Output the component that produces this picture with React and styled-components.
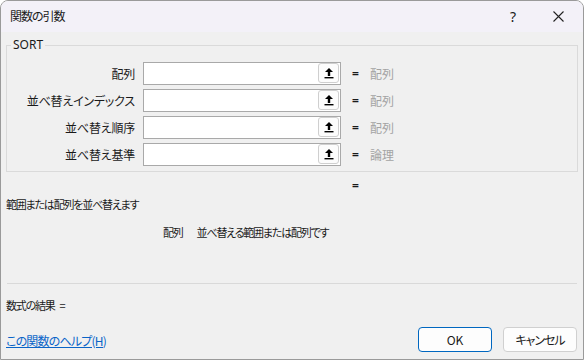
import React from "react";
import styled, { createGlobalStyle } from "styled-components";

const Global = createGlobalStyle`
  html, body { margin: 0; padding: 0; background: #ffffff; }
  body {
    font-family: "Noto Sans CJK JP", "Noto Sans", sans-serif;
    font-feature-settings: "palt";
    font-size: 12px;
    color: #1a1a1a;
  }
`;

const Window = styled.div`
  box-sizing: border-box;
  width: 584px;
  height: 360px;
  border: 1px solid #9a9a9a;
  border-radius: 8px 8px 0 0;
  background: #f0f0f0;
  overflow: hidden;
  display: flex;
  flex-direction: column;
`;

const TitleBar = styled.div`
  height: 31px;
  flex: none;
  background: #f3f1f8;
  display: flex;
  align-items: center;
  padding-left: 9px;
  padding-right: 3px;
`;

const Title = styled.div`
  flex: 1;
  font-size: 12px;
  letter-spacing: -1px;
  line-height: 1;
  margin-top: -1px;
`;

const TitleButton = styled.div`
  width: ${(p) => p.$w}px;
  height: 31px;
  display: flex;
  align-items: center;
  justify-content: center;
  font-family: "Noto Sans", sans-serif;
  font-size: 14px;
`;

const Body = styled.div`
  flex: 1;
  display: flex;
  flex-direction: column;
  padding: 13px 5px 0 5px;
`;

const Group = styled.div`
  position: relative;
  border: 1px solid #dadada;
  padding: 16px 0 6px 0;
  display: flex;
  flex-direction: column;
  gap: 5px;
`;

const GroupLabel = styled.div`
  position: absolute;
  left: 4px;
  top: -8px;
  padding: 0 2px;
  background: #f0f0f0;
  font-family: "Noto Sans", sans-serif;
  font-size: 12px;
  line-height: 14px;
`;

const Row = styled.div`
  display: flex;
  align-items: center;
  height: 22px;
`;

const ArgLabel = styled.div`
  width: 128px;
  text-align: right;
  margin-right: 8px;
  letter-spacing: -0.2px;
`;

const InputBox = styled.div`
  box-sizing: border-box;
  width: 198px;
  height: 23px;
  border: 1px solid #a9a9a9;
  background: #ffffff;
  display: flex;
  justify-content: flex-end;
  align-items: center;
  padding-right: 1px;
`;

const RefButton = styled.div`
  box-sizing: border-box;
  width: 21px;
  height: 20px;
  border: 1px solid #cfcfcf;
  border-radius: 3px;
  background: #fcfcfc;
  display: flex;
  align-items: center;
  justify-content: center;
`;

const Eq = styled.div`
  margin-left: 11px;
  font-family: "Noto Sans", sans-serif;
  font-weight: bold;
  width: 8px;
`;

const TypeText = styled.div`
  margin-left: 10px;
  color: #a3a3a3;
`;

const ResultEq = styled.div`
  margin: 7px 0 0 346px;
  font-family: "Noto Sans", sans-serif;
  font-weight: bold;
  line-height: 14px;
`;

const Text = styled.div`
  font-size: 11px;
  letter-spacing: -1.2px;
  line-height: 16px;
`;

const Desc = styled(Text)`
  margin-top: 3px;
`;

const ArgDesc = styled(Text)`
  margin: 12px 0 0 157px;
`;

const ArgName = styled.span`
  margin-right: 14px;
`;

const ResultEqInline = styled.span`
  margin-left: 5px;
  letter-spacing: 0;
`;

const Separator = styled.div`
  margin: 43px 1px 0 1px;
  height: 1px;
  background: #d9d9d9;
`;

const FormulaResult = styled(Text)`
  margin-top: 13px;
`;

const Footer = styled.div`
  margin-top: 14px;
  display: flex;
  align-items: center;
`;

const HelpLink = styled.a`
  flex: 1;
  color: #0a64c8;
  text-decoration: underline;
  cursor: pointer;
  margin-top: 1px;
  letter-spacing: -0.8px;
`;

const Button = styled.button`
  box-sizing: border-box;
  width: 74px;
  height: 25px;
  margin-left: ${(p) => p.$ml}px;
  background: #fdfdfd;
  border: 1px solid ${(p) => (p.$primary ? "#0067c0" : "#d0d0d0")};
  border-radius: 4px;
  font-family: "Noto Sans CJK JP", "Noto Sans", sans-serif;
  font-feature-settings: "palt";
  font-size: 12px;
  letter-spacing: ${(p) => (p.$primary ? "0" : "-1px")};
  color: #1a1a1a;
  padding: 0;
`;

const UpArrow = () => (
  <svg width="10" height="12" viewBox="0 0 10 12">
    <path d="M5 1 L9 5 L6.2 5 L6.2 9 L3.8 9 L3.8 5 L1 5 Z" fill="#000" />
    <rect x="0.5" y="10" width="9" height="1.4" fill="#000" />
  </svg>
);

const CloseIcon = () => (
  <svg width="11" height="11" viewBox="0 0 11 11">
    <path d="M0.5 0.5 L10.5 10.5 M10.5 0.5 L0.5 10.5" stroke="#222" strokeWidth="1.1" />
  </svg>
);

const args = [
  { label: "配列", type: "配列" },
  { label: "並べ替えインデックス", type: "配列" },
  { label: "並べ替え順序", type: "配列" },
  { label: "並べ替え基準", type: "論理" },
];

export default function App() {
  return (
    <>
      <Global />
      <Window>
        <TitleBar>
          <Title>関数の引数</Title>
          <TitleButton $w={46}>?</TitleButton>
          <TitleButton $w={44}>
            <CloseIcon />
          </TitleButton>
        </TitleBar>
        <Body>
          <Group>
            <GroupLabel>SORT</GroupLabel>
            {args.map((a) => (
              <Row key={a.label}>
                <ArgLabel>{a.label}</ArgLabel>
                <InputBox>
                  <RefButton>
                    <UpArrow />
                  </RefButton>
                </InputBox>
                <Eq>=</Eq>
                <TypeText>{a.type}</TypeText>
              </Row>
            ))}
          </Group>
          <ResultEq>=</ResultEq>
          <Desc>範囲または配列を並べ替えます</Desc>
          <ArgDesc>
            <ArgName>配列</ArgName>並べ替える範囲または配列です
          </ArgDesc>
          <Separator />
          <FormulaResult>
            数式の結果<ResultEqInline>=</ResultEqInline>
          </FormulaResult>
          <Footer>
            <HelpLink>この関数のヘルプ(H)</HelpLink>
            <Button $primary $ml={0}>OK</Button>
            <Button $ml={11}>キャンセル</Button>
            <div style={{ width: 1 }} />
          </Footer>
        </Body>
      </Window>
    </>
  );
}
